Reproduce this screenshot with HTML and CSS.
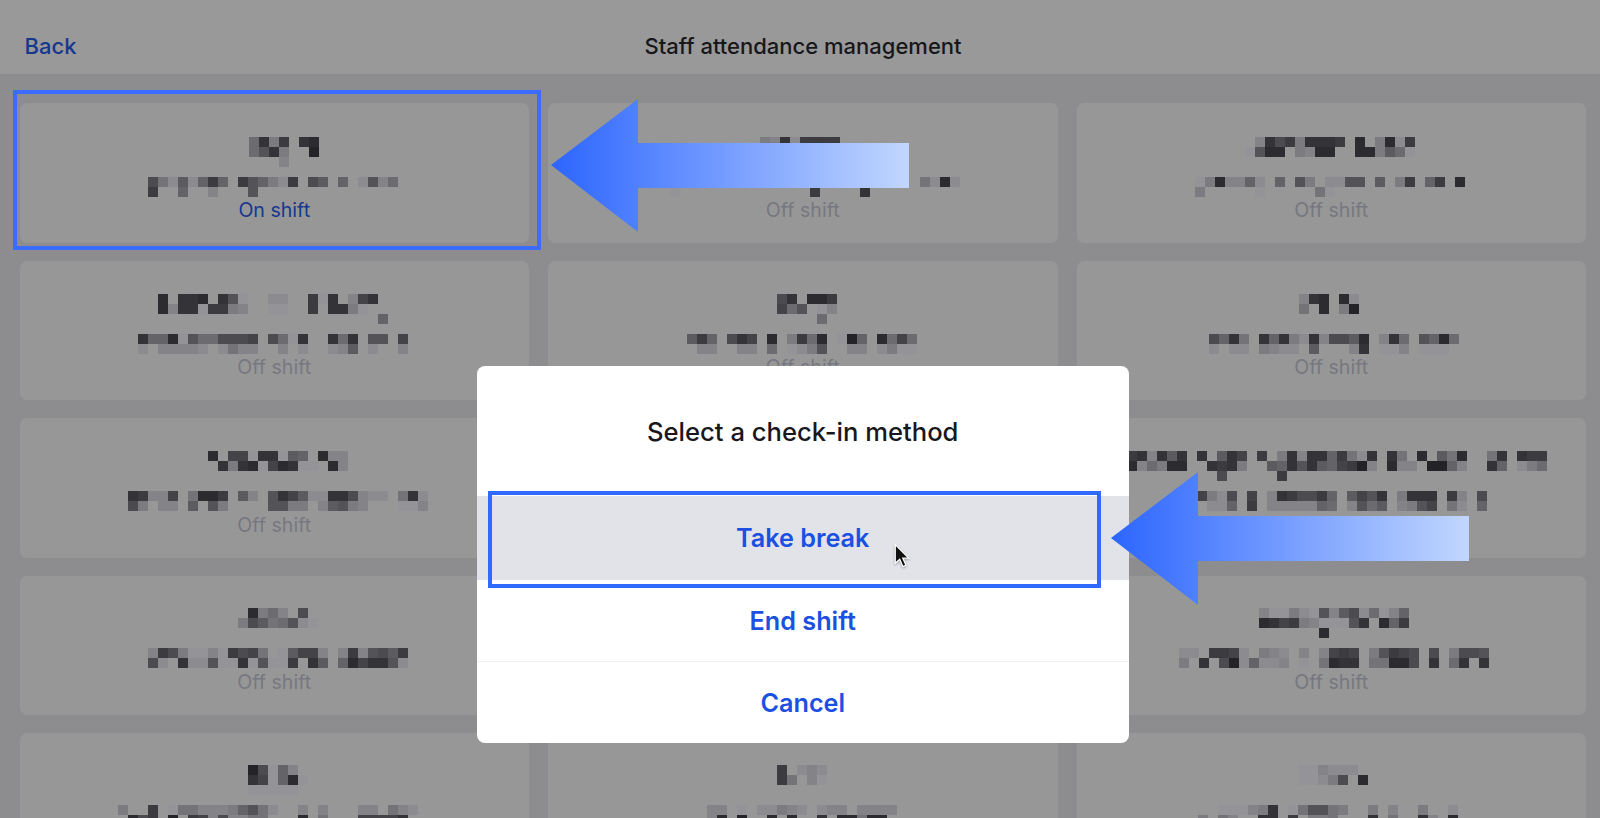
FILE: index.html
```html
<!doctype html>
<html>
<head>
    <meta charset="utf-8">
    <title>Staff attendance management</title>
    <link rel="stylesheet" href="styles.css">
</head>

<body>
    <div class="header">
        <a class="back" href="#">Back</a>
        <h1>Staff attendance management</h1>
    </div>

    <!-- names are pixelated in the source, data-rows holds one hex shade per 10px cell -->
    <div class="staff">
        <div class="card card-marked">
            <div class="name mosaic" data-x="229" data-y="2.4" data-rows="92b3.21|962b..0|...c"></div>
            <div class="meta mosaic" data-x="128.5" data-y="2.4" data-rows="5ad7d838.368bd3.57.8.d6c9|3..8..c...6"></div>
            <div class="status on">On shift</div>
        </div>
        <div class="card">
            <div class="name mosaic" data-x="212" data-y="2.3" data-rows="bc2d3333"></div>
            <div class="meta mosaic" data-x="122" data-y="2.3" data-rows=".........................ad1d|e.............3....2"></div>
            <div class="status">Off shift</div>
        </div>
        <div class="card">
            <div class="name mosaic" data-x="168.5" data-y="2.4" data-rows=".c253b2223.1.b1d3|e611.bc11..11b79e"></div>
            <div class="meta mosaic" data-x="118.5" data-y="2.4" data-rows="eb1cc8d.8.6b.dd66.7.b3.83.1|b.....e.....ae"></div>
            <div class="status">Off shift</div>
        </div>

        <div class="card">
            <div class="name mosaic" data-x="138.5" data-y="1.3" data-rows="1.221.26e..dd..3e2.c42|1c22e33bc..ee..3.22be|......................8"></div>
            <div class="meta mosaic" data-x="118.5" data-y="1" data-rows="2881e6995554.59e2..292.66.4|d.ccccd.dacc..c.d..dc7.d..c"></div>
            <div class="status">Off shift</div>
        </div>
        <div class="card">
            <div class="name mosaic" data-x="229" data-y="1.3" data-rows="52.113|496.ec|....9"></div>
            <div class="meta mosaic" data-x="139" data-y="1" data-rows="738.524.1.b391.e08.1949|.cc..cc.9.edb6..cc.dbee"></div>
            <div class="status">Off shift</div>
        </div>
        <div class="card">
            <div class="name mosaic" data-x="222.5" data-y="1.3" data-rows="c21.1d|a.1.b0"></div>
            <div class="meta mosaic" data-x="132.5" data-y="1" data-rows="582a.282bd2c5571.c29.6819|d.dd.bcdd.7...c2.eec.eee"></div>
            <div class="status">Off shift</div>
        </div>

        <div class="card">
            <div class="name mosaic" data-x="188.5" data-y="0.7" data-rows="1.44e22e78.1cc|.2b21e412ee.1c"></div>
            <div class="meta mosaic" data-x="108.8" data-y="0.7" data-rows="23cc4.a113.7c.6247dd225cdd.a2d|5b.cc.7.6b....66bb.c76bc...eec"></div>
            <div class="status">Off shift</div>
        </div>
        <div class="card"></div>
        <div class="card">
            <div class="name mosaic" data-x="50.5" data-y="1" data-rows="32c272.2.724.3.b2c2283ad2.2a.1.7a1..a2.233|1c9b11..232b..7826278430c.1cc.008c..28.db9|.........5.....3"></div>
            <div class="meta mosaic" data-x="120.5" data-y="0.7" data-rows="4bd5.4.c235538.7462.b222.3c.5|.dd8.3.ccccc89.c697.cb64.ad.8"></div>
        </div>

        <div class="card">
            <div class="name mosaic" data-x="218.5" data-y="0" data-rows=".1b9c.5|b57a96de"></div>
            <div class="meta mosaic" data-x="128.5" data-y="0" data-rows="c35beece354a.e744c.c3c6573|5d.2dd6ee2e6ee3.27.814226d"></div>
            <div class="status">Off shift</div>
        </div>
        <div class="card"></div>
        <div class="card">
            <div class="name mosaic" data-x="182.5" data-y="0.3" data-rows="ceebde6c75d9ec8|1243bceee62.183|......1"></div>
            <div class="meta mosaic" data-x="102.5" data-y="0.3" data-rows="dd.334d.bcd.c.c434.b6345.5.b556|b.2.50d8ddc.e.a122.aa115.2.92.2"></div>
            <div class="status">Off shift</div>
        </div>

        <div class="card">
            <div class="name mosaic" data-x="228.5" data-y="0" data-rows="05e8c|24e81e|eeeee"></div>
            <div class="meta mosaic" data-x="98.5" data-y="0" data-rows="b..3.eaacccb86ad..c.c...cc.acd|.153.0.34c5ccaa...1.a...44442"></div>
        </div>
        <div class="card">
            <div class="name mosaic" data-x="229" data-y="0" data-rows="3.dcd|3a.ce"></div>
            <div class="meta mosaic" data-x="159" data-y="0" data-rows="cc.e.ddbcd.dcc.cccc|c1.0..1.1..2.11a11"></div>
        </div>
        <div class="card">
            <div class="name mosaic" data-x="221.5" data-y="0" data-rows="eecddd|eedb5.1"></div>
            <div class="meta mosaic" data-x="121.5" data-y="0" data-rows="..eeecb2.ea66ab..b.c..b..d|b.ac..22.3.bba...2.a..2c.1"></div>
        </div>
    </div>

    <div class="modal">
        <div class="modal-title">Select a check-in method</div>
        <div class="option option-hover">
            Take break
            <svg class="cursor" width="18" height="27" viewBox="0 0 16 24">
                <path d="M2 1.5V18l4-3.6 2.8 6.6 2.7-1.2-2.8-6.3h5.2z" fill="#111" stroke="#fff" stroke-width="1.1"/>
            </svg>
        </div>
        <div class="option">End shift</div>
        <div class="option option-line">Cancel</div>
    </div>

    <svg class="arrow arrow-card" width="358" height="133" viewBox="0 0 358 133">
        <defs>
            <linearGradient id="arrowfill">
                <stop offset="0" stop-color="#2c65ff"/>
                <stop offset="1" stop-color="#c2d7ff"/>
            </linearGradient>
        </defs>
        <path d="M0 66 87 0V44H358V89H87V133Z" fill="url(#arrowfill)"/>
    </svg>
    <svg class="arrow arrow-option" width="358" height="133" viewBox="0 0 358 133">
        <path d="M0 66 87 0V44H358V89H87V133Z" fill="url(#arrowfill)"/>
    </svg>

    <script src="mosaic.js"></script>
</body>
</html>
```

FILE: styles.css
```css
* {
  box-sizing: border-box;
}

html {
  font-family: Inter, "Liberation Sans", sans-serif;
}

body {
  margin: 0;
  height: 818px;
  overflow: hidden;
  position: relative;
  background-color: #8d8d8f;
}

.header {
  display: flex;
  justify-content: center;
  align-items: center;
  position: relative;
  height: 74px;
  padding: 18px 0 0 6px;
  background-color: #999999;
}

.header h1 {
  margin: 0;
  font-size: 22px;
  font-weight: 500;
  color: #17171b;
}

.back {
  position: absolute;
  left: 24.5px;
  font-size: 22px;
  font-weight: 500;
  color: #17378f;
  text-decoration: none;
}

.staff {
  display: grid;
  grid-template-columns: repeat(3, 1fr);
  grid-auto-rows: 139.5px;
  gap: 18px 19px;
  padding: 29px 14px 0 19.5px;
}

.card {
  position: relative;
  padding-top: 32px;
  border-radius: 7px;
  background-color: #979797;
  text-align: center;
}

.card-marked::after {
  content: "";
  position: absolute;
  inset: -13.5px -11.5px -7.5px -6.5px;
  border: 4px solid #3b6cff;
}

.mosaic {
  text-align: left;
}

.name {
  height: 40px;
}

.meta {
  height: 24.5px;
}

.mosaic-row {
  display: flex;
  height: 10px;
}

.mosaic-row span {
  flex: 0 0 10px;
}

.status {
  font-size: 19.6px;
  line-height: 21px;
  color: #777780;
}

.status.on {
  color: #17378f;
}

.modal {
  position: absolute;
  left: 476.5px;
  top: 366px;
  width: 652.5px;
  height: 377px;
  padding-top: 130px;
  border-radius: 8px;
  background-color: #ffffff;
}

.modal-title {
  position: absolute;
  left: 0;
  right: 0;
  top: 49.5px;
  text-align: center;
  font-size: 25.6px;
  line-height: 32px;
  font-weight: 500;
  color: #18181c;
}

.option {
  position: relative;
  display: flex;
  justify-content: center;
  align-items: center;
  height: 81px;
  font-size: 25.2px;
  font-weight: 600;
  color: #1b50e2;
}

.option-hover {
  height: 84px;
  background-color: #e2e3e8;
}

.option-hover::after {
  content: "";
  position: absolute;
  inset: -5.5px 28px -8px 11px;
  border: 4px solid #2f6bff;
}

.option-line {
  height: 82px;
  border-top: 1px solid #f0f0f2;
}

.cursor {
  position: absolute;
  left: 416.5px;
  top: 46.5px;
  filter: drop-shadow(0 1px 1px rgba(0,0,0,0.3));
}

.arrow {
  position: absolute;
}

.arrow-card {
  left: 551px;
  top: 99px;
}

.arrow-option {
  left: 1111px;
  top: 472px;
}
```

FILE: mosaic.js
```js
// draws the pixelated names: each char in a row is one cell, "." stays empty
var mosaics = document.querySelectorAll(".mosaic");

for (var i = 0; i < mosaics.length; i++) {
    var el = mosaics[i];
    el.style.padding = el.dataset.y + "px 0 0 " + el.dataset.x + "px";

    var rows = el.dataset.rows.split("|");
    for (var r = 0; r < rows.length; r++) {
        var row = document.createElement("div");
        row.className = "mosaic-row";
        for (var c = 0; c < rows[r].length; c++) {
            var cell = document.createElement("span");
            if (rows[r][c] != ".") {
                var g = 0x24 + parseInt(rows[r][c], 16) * 8;
                cell.style.backgroundColor = "rgb(" + g + "," + g + "," + (g + 4) + ")";
            }
            row.appendChild(cell);
        }
        el.appendChild(row);
    }
}
```
